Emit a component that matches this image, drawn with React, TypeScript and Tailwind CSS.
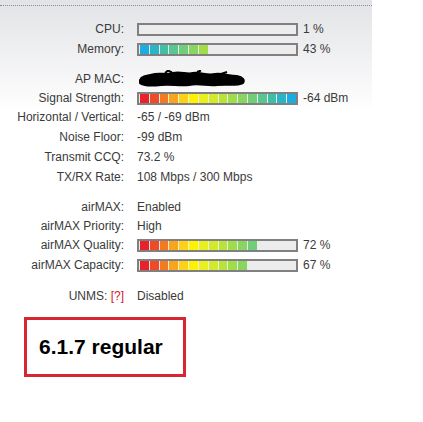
const PALETTE = [
  '#e8212b', '#ee4a25', '#f37a20', '#f8a51c', '#fcd116', '#fff200', '#e8f01f', '#d2ea2a',
  '#b9e437', '#a0dd4b', '#88d661', '#70ce79', '#58c690', '#40bea8', '#2ab5c6', '#1aade2',
];

type Row = {
  label: string;
  value?: string;
  help?: boolean;
  bar?: number;
  reverse?: boolean;
  mac?: boolean;
  short?: boolean;
};

const groups: Row[][] = [
  [
    { label: 'CPU:', bar: 1, reverse: true, value: '1 %' },
    { label: 'Memory:', bar: 43, reverse: true, value: '43 %' },
  ],
  [
    { label: 'AP MAC:', mac: true },
    { label: 'Signal Strength:', bar: 100, value: '-64 dBm', short: true },
    { label: 'Horizontal / Vertical:', value: '-65 / -69 dBm' },
    { label: 'Noise Floor:', value: '-99 dBm' },
    { label: 'Transmit CCQ:', value: '73.2 %' },
    { label: 'TX/RX Rate:', value: '108 Mbps / 300 Mbps' },
  ],
  [
    { label: 'airMAX:', value: 'Enabled' },
    { label: 'airMAX Priority:', value: 'High', short: true },
    { label: 'airMAX Quality:', bar: 72, value: '72 %' },
    { label: 'airMAX Capacity:', bar: 67, value: '67 %' },
  ],
  [{ label: 'UNMS:', value: 'Disabled', help: true }],
];

function Bar({ pct, reverse }: { pct: number; reverse?: boolean }) {
  const colors = reverse ? [...PALETTE].reverse() : PALETTE;
  const count = Math.round((pct / 100) * 16);
  return (
    <div className="w-[161px] h-[13px] border-2 border-[#808080] bg-[#ececec] px-px">
      <div className="flex gap-px h-full w-[156px]">
        {colors.map((c, i) => (
          <div key={c} className="flex-1 h-full" style={{ background: i < count ? c : 'transparent' }} />
        ))}
      </div>
    </div>
  );
}

function Mac() {
  return (
    <svg width="110" height="18" viewBox="0 0 110 18">
      <path
        d="M3 10 C5 5 12 6 18 4 C24 3 30 5 36 3 C44 1 50 5 56 3 C64 2 70 6 78 4 C86 3 92 6 100 6 C106 7 108 10 106 13 C100 16 90 14 80 15 C70 16 62 13 52 15 C42 16 34 14 24 15 C14 16 6 16 3 13 Z"
        fill="#000"
        stroke="#000"
        strokeWidth="2"
        strokeLinejoin="round"
      />
      <path d="M28 3 L31 0.5 L35 2.5 M60 2 L64 0.5 M84 4 L90 2" stroke="#000" strokeWidth="2" fill="none" />
    </svg>
  );
}

export default function App() {
  return (
    <div className="w-[423px] h-[422px] bg-white text-[12px] text-[#3a3a3a] font-['Liberation_Sans',Arial,sans-serif]">
      <div className="w-[372px] pt-[5px] bg-gradient-to-b from-[#e2e3e6] from-0% to-white to-[36%]">
        <div className="border-t border-dotted border-[#8a8a8a] pt-[13px] pb-[8px] flex flex-col gap-[10px]">
          {groups.map((g, gi) => (
            <div key={gi} className={`flex flex-col ${gi === 3 ? 'mt-px' : ''}`}>
              {g.map((r) => (
                <div key={r.label} className={`flex items-center ${r.short ? 'h-[18px]' : 'h-5'}`}>
                  <div className="w-[124px] text-right whitespace-nowrap">
                    {r.label}
                    {r.help ? <span className="text-[#d0202e]"> [?]</span> : null}
                  </div>
                  <div className="pl-[13px] flex items-center whitespace-nowrap">
                    {r.mac ? (
                      <Mac />
                    ) : r.bar !== undefined ? (
                      <>
                        <Bar pct={r.bar} reverse={r.reverse} />
                        <span className="ml-[5px]">{r.value}</span>
                      </>
                    ) : (
                      <span>{r.value}</span>
                    )}
                  </div>
                </div>
              ))}
            </div>
          ))}
        </div>
      </div>
      <div className="ml-[24px] mt-[3px] w-[162px] h-[60px] border-[3px] border-[#d6262f] pl-3 pt-[11px]">
        <span className="text-[21px] font-bold text-black">6.1.7 regular</span>
      </div>
    </div>
  );
}
